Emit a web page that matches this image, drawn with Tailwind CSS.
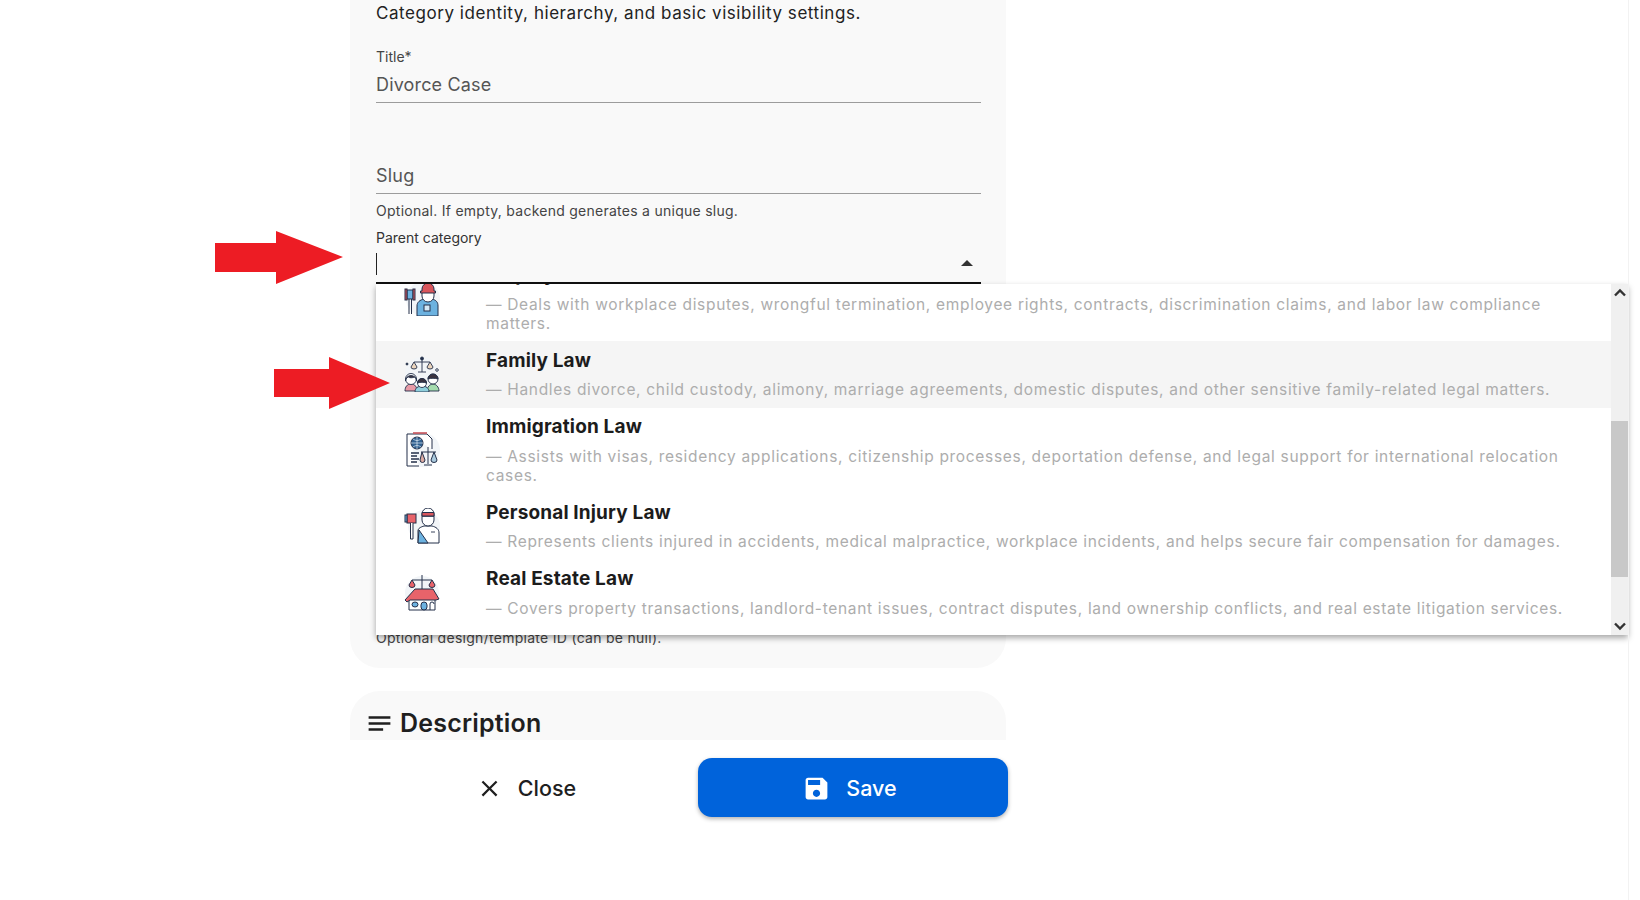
<!DOCTYPE html>
<html lang="en">
<head>
    <meta charset="UTF-8">
    <title>Edit Category</title>
    <script src="https://cdn.jsdelivr.net/npm/@tailwindcss/browser@4"></script>
</head>
<body class="relative h-[900px] w-[1640px] overflow-hidden bg-white font-['Inter',sans-serif] text-[#1f1f1f]">
    <!-- Scroll area -->
    <div class="h-[740px] overflow-hidden pl-[350px]">
        <div class="flex w-[656px] flex-col gap-[23px]">
            <!-- Basic info card -->
            <section class="flex h-[668px] flex-col rounded-b-[30px] bg-[#f9f9f9] pl-[26px] pr-[25px]">
                <p class="h-[26px] text-[17px] leading-[26px] tracking-[0.55px] text-[#222]">Category identity, hierarchy, and basic visibility settings.</p>

                <label class="mt-[21px] h-[20px] text-[14px] leading-[20px] text-[#444]">Title*</label>
                <div class="h-[36px] border-b border-[#9c9c9c] pt-[6px] text-[18px] leading-[24px] tracking-[0.15px] text-[#555]">Divorce Case</div>

                <div class="mt-[58px] h-[33px] border-b border-[#9c9c9c] text-[18px] leading-[30px] tracking-[0.2px] text-[#555]">Slug</div>
                <p class="mt-[7px] h-[20px] text-[14px] leading-[20px] tracking-[0.26px] text-[#444]">Optional. If empty, backend generates a unique slug.</p>

                <label class="mt-[7px] h-[20px] text-[14px] leading-[20px] text-[#333]">Parent category</label>
                <div class="relative h-[36px] border-b-2 border-[#111]">
                    <div class="mt-[5px] h-[22px] w-px bg-[#222]"></div>
                    <div class="absolute right-[8px] top-[12px] h-0 w-0 border-x-[6px] border-b-[6px] border-x-transparent border-b-[#333]"></div>
                </div>

                <p class="mt-auto mb-[20px] h-[20px] text-[14px] leading-[20px] tracking-[0.28px] text-[#444]">Optional design/template ID (can be null).</p>
            </section>

            <!-- Description card -->
            <section class="h-[120px] rounded-t-[30px] bg-[#f9f9f9] pl-[15px] pt-[16px]">
                <div class="flex items-center gap-[6px]">
                    <svg class="h-[29px] w-[29px] fill-[#1f1f1f]" viewBox="0 0 24 24"><path d="M3 18h12v-2H3v2zM3 6v2h18V6H3zm0 7h18v-2H3v2z"/></svg>
                    <h2 class="text-[25px] font-semibold leading-[32px] tracking-[0.2px]">Description</h2>
                </div>
            </section>
        </div>
    </div>

    <!-- Footer actions -->
    <div class="ml-[350px] flex w-[658px] pt-[18px]">
        <button class="flex h-[59px] w-[348px] items-center justify-center gap-[15px] pl-[4px] pt-[1px] text-[21.5px] font-medium text-[#1f1f1f]">
            <svg class="h-[27px] w-[27px] fill-[#1f1f1f]" viewBox="0 0 24 24"><path d="M19 6.41 17.59 5 12 10.59 6.41 5 5 6.41 10.59 12 5 17.59 6.41 19 12 13.41 17.59 19 19 17.59 13.41 12z"/></svg>
            Close
        </button>
        <button class="flex h-[59px] w-[310px] items-center justify-center gap-[15px] rounded-[14px] bg-[#0063db] pr-[7px] pt-[1px] text-[21.5px] font-medium text-white shadow-[0_2px_4px_rgba(0,0,0,0.3)]">
            <svg class="h-[29px] w-[29px] fill-white" viewBox="0 0 24 24"><path d="M17 3H5c-1.11 0-2 .9-2 2v14c0 1.1.89 2 2 2h14c1.1 0 2-.9 2-2V7l-4-4zm-5 16c-1.66 0-3-1.34-3-3s1.34-3 3-3 3 1.34 3 3-1.34 3-3 3zm3-10H5V5h10v4z"/></svg>
            Save
        </button>
    </div>

    <!-- Dropdown panel -->
    <div class="absolute left-[376px] top-[284px] flex h-[351px] w-[1252px] overflow-hidden bg-white shadow-[0_3px_6px_rgba(0,0,0,0.35)]">
        <ul class="-mt-[28.5px] flex-1">
            <li class="flex items-center">
                <div class="w-[110px] pl-[28px]">
                    <svg class="block" width="36" height="36" viewBox="0 0 36 36" fill="none" stroke="#24304a" stroke-width="1">
                        <circle cx="19" cy="19" r="17" fill="#f2f5f8" stroke="none"/>
                        <path d="M13 36v-10c0-4 3-6 7-7h8c4 1 6 3 6 7v10z" fill="#6cb2e0"/>
                        <rect x="20" y="25" width="6" height="6" fill="#d5e9f6"/>
                        <path d="M18 12h12v4a6 6 0 0 1-12 0z" fill="#fff"/>
                        <path d="M18 9a6 6 0 0 1 12 0v2h1.500v2h-15v-2H18z" fill="#d9565c"/>
                        <rect x="3" y="10" width="6" height="9" fill="#6cb2e0"/>
                        <rect x="1" y="9" width="2" height="11" fill="#d9565c"/>
                        <rect x="9" y="9" width="2" height="11" fill="#d9565c"/>
                        <path d="M5 19v15M7.500 19v15"/>
                    </svg>
                </div>
                <div class="min-w-0 flex-1 pb-[8.5px] pr-[24px] pt-[5.5px]">
                    <div class="h-[28px] text-[19px] font-bold leading-[28px] tracking-[0.15px] text-[#1c1c1c]">Employment Law</div>
                    <p class="mt-[5.5px] text-[15.5px] leading-[19px] tracking-[0.685px] text-[#adadad]">— Deals with workplace disputes, wrongful termination, employee rights, contracts, discrimination claims, and labor law compliance matters.</p>
                </div>
            </li>
            <li class="flex items-center bg-[#f5f5f5]">
                <div class="w-[110px] pl-[28px]">
                    <svg class="block" width="36" height="36" viewBox="0 0 36 36" fill="none" stroke="#24304a" stroke-width=".9">
                        <circle cx="18" cy="18" r="17" fill="#f2f5f8" stroke="none"/>
                        <path d="M18 2v14M10 6h16M14 16h8"/>
                        <path d="M7 11l3-5 3 5a3 2 0 0 1-6 0zM23 11l3-5 3 5a3 2 0 0 1-6 0z" fill="#ead4bd"/>
                        <circle cx="18" cy="2.500" r="1.500" fill="#24304a"/>
                        <circle cx="3" cy="8" r="1" fill="#24304a"/>
                        <circle cx="33" cy="14" r="1.300"/>
                        <path d="M1 35c0-4 2-7 6-7s6 3 6 7z" fill="#e79aa6"/>
                        <path d="M23 35c0-4 3-7 6-7s6 3 6 7z" fill="#a5dcae"/>
                        <path d="M11 36c0-4 3-6 7-6s7 2 7 6z" fill="#8fcfdc"/>
                        <circle cx="7" cy="23" r="5.500" fill="#fff"/>
                        <path d="M1.500 25a5.500 5.500 0 1 1 11 0c0-2-1-4-2-4-2 1-5 1-6 0-1 0-3 2-3 4z" fill="#3a3340"/>
                        <circle cx="29" cy="23" r="5" fill="#fff"/>
                        <path d="M24 23a5 5 0 0 1 10 0c-3-1-7-1-10 0z" fill="#3a3340"/>
                        <circle cx="18" cy="27" r="4.500" fill="#fff"/>
                        <path d="M13.500 27a4.500 4.500 0 0 1 9 0c-3-1-6-1-9 0z" fill="#3a3340"/>
                    </svg>
                </div>
                <div class="min-w-0 flex-1 pb-[8.5px] pr-[24px] pt-[5.5px]">
                    <div class="h-[28px] text-[19px] font-bold leading-[28px] tracking-[0.15px] text-[#1c1c1c]">Family Law</div>
                    <p class="mt-[5.5px] text-[15.5px] leading-[19px] tracking-[0.685px] text-[#adadad]">— Handles divorce, child custody, alimony, marriage agreements, domestic disputes, and other sensitive family-related legal matters.</p>
                </div>
            </li>
            <li class="flex items-center">
                <div class="w-[110px] pl-[28px]">
                    <svg class="block" width="36" height="36" viewBox="0 0 36 36" fill="none" stroke="#24304a" stroke-width="1">
                        <circle cx="19" cy="18" r="17" fill="#f2f5f8" stroke="none"/>
                        <path d="M3 2h20l5 5v10M3 2v32h12" fill="#fff"/>
                        <path d="M9 1h14" stroke="#c9545c" stroke-width="1.600"/>
                        <circle cx="13" cy="11" r="6" fill="#2f5f8f"/>
                        <path d="M7 11h12M13 5v12M9 7c3 2 5 2 8 0M9 15c3-2 5-2 8 0" stroke="#dceaf5" stroke-width=".7"/>
                        <path d="M7 21h8M7 24h6M7 27h8M7 30h6" stroke-width="1.300"/>
                        <path d="M24 15v17M17 20h15M20 33h8"/>
                        <path d="M16 28l2-8 3 8a2.500 2.500 0 0 1-5 0z" fill="#d9a9a0"/>
                        <path d="M27 28l3-8 3 8a3 2.500 0 0 1-6 0z" fill="#a9c9dd"/>
                    </svg>
                </div>
                <div class="min-w-0 flex-1 pb-[8.5px] pr-[24px] pt-[5.5px]">
                    <div class="h-[28px] text-[19px] font-bold leading-[28px] tracking-[0.15px] text-[#1c1c1c]">Immigration Law</div>
                    <p class="mt-[5.5px] text-[15.5px] leading-[19px] tracking-[0.685px] text-[#adadad]">— Assists with visas, residency applications, citizenship processes, deportation defense, and legal support for international relocation cases.</p>
                </div>
            </li>
            <li class="flex items-center">
                <div class="w-[110px] pl-[28px]">
                    <svg class="block" width="36" height="36" viewBox="0 0 36 36" fill="none" stroke="#24304a" stroke-width="1">
                        <circle cx="20" cy="18" r="16" fill="#f2f5f8" stroke="none"/>
                        <path d="M14 35v-12c0-3 3-4 6-5h8c4 1 7 3 7 7v10z" fill="#fff"/>
                        <path d="M15 22l9 13H14z" fill="#6cb2e0"/>
                        <path d="M18 8h12v4a6 6 0 0 1-12 0z" fill="#fff"/>
                        <path d="M18 6a6 6 0 0 1 12 0v2H18z" fill="#fff"/>
                        <path d="M18 4.500h12v3.500H18z" fill="#d9565c"/>
                        <rect x="3" y="6" width="9" height="9" fill="#e8636a"/>
                        <rect x="1" y="7" width="2" height="7" fill="#6cb2e0"/>
                        <path d="M6.500 15v16h2.500V15" fill="#fff"/>
                        <path d="M27 24h4" stroke-width=".9"/>
                    </svg>
                </div>
                <div class="min-w-0 flex-1 pb-[8.5px] pr-[24px] pt-[5.5px]">
                    <div class="h-[28px] text-[19px] font-bold leading-[28px] tracking-[0.15px] text-[#1c1c1c]">Personal Injury Law</div>
                    <p class="mt-[5.5px] text-[15.5px] leading-[19px] tracking-[0.685px] text-[#adadad]">— Represents clients injured in accidents, medical malpractice, workplace incidents, and helps secure fair compensation for damages.</p>
                </div>
            </li>
            <li class="flex items-center">
                <div class="w-[110px] pl-[28px]">
                    <svg class="block" width="36" height="36" viewBox="0 0 36 36" fill="none" stroke="#24304a" stroke-width="1">
                        <circle cx="18" cy="18" r="17" fill="#f2f5f8" stroke="none"/>
                        <path d="M18 0v15M8 5h20"/>
                        <path d="M5 10l3-5 3 5a3 2.500 0 0 1-6 0zM25 10l3-5 3 5a3 2.500 0 0 1-6 0z" fill="#e8636a"/>
                        <path d="M5 23v12h26V23" fill="#fff"/>
                        <path d="M1 25L11 14h18l6 10-3 1H6l-3 2z" fill="#e8636a"/>
                        <rect x="8" y="27" width="6" height="5" rx="3" fill="#6cb2e0"/>
                        <rect x="17" y="27" width="6" height="8" rx="3" fill="#6cb2e0"/>
                        <path d="M26 35v-6a2 2 0 0 1 4 0"/>
                    </svg>
                </div>
                <div class="min-w-0 flex-1 pb-[8.5px] pr-[24px] pt-[5.5px]">
                    <div class="h-[28px] text-[19px] font-bold leading-[28px] tracking-[0.15px] text-[#1c1c1c]">Real Estate Law</div>
                    <p class="mt-[5.5px] text-[15.5px] leading-[19px] tracking-[0.685px] text-[#adadad]">— Covers property transactions, landlord-tenant issues, contract disputes, land ownership conflicts, and real estate litigation services.</p>
                </div>
            </li>
        </ul>
        <!-- Scrollbar -->
        <div class="relative w-[17px] shrink-0 bg-[#f0f0f0]">
            <div class="absolute left-0 top-[137px] h-[156px] w-full bg-[#c8c8c8]"></div>
            <svg class="absolute left-[2px] top-[2px]" width="14" height="14" viewBox="0 0 14 14" fill="none" stroke="#333" stroke-width="2.400"><path d="M2 9.500 7 4.500l5 5"/></svg>
            <svg class="absolute bottom-[2px] left-[2px]" width="14" height="14" viewBox="0 0 14 14" fill="none" stroke="#333" stroke-width="2.400"><path d="M2 4.500 7 9.500l5-5"/></svg>
        </div>
    </div>

    <!-- Window edge -->
    <div class="absolute bottom-0 left-[1628px] top-0 w-px bg-[#f2f2f2]"></div>

    <!-- Annotation arrows -->
    <svg class="absolute left-[215px] top-[231px]" width="128" height="53" viewBox="0 0 128 53"><polygon points="0,12 61,12 61,0 128,26 61,53 61,41 0,41" fill="#ed1c24"/></svg>
    <svg class="absolute left-[274px] top-[357px]" width="116" height="52" viewBox="0 0 116 52"><polygon points="0,12 55,12 55,0 116,26 55,52 55,40 0,40" fill="#ed1c24"/></svg>
</body>
</html>
